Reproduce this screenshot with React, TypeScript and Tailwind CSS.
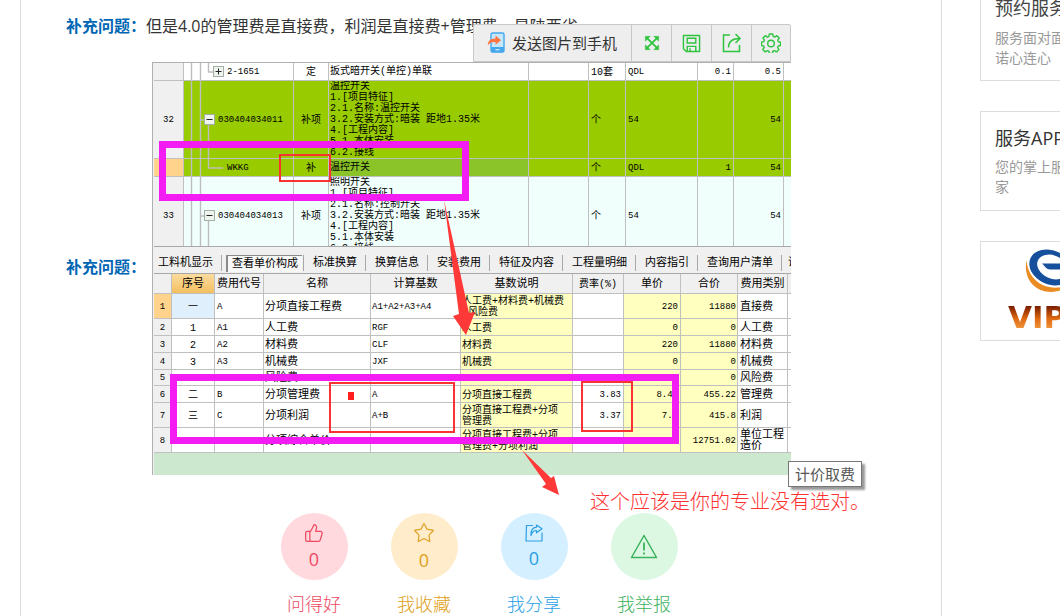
import React from 'react';
import { ThumbsUp, Star, TriangleAlert } from "lucide-react";

type TreeKind = 'plus' | 'minus' | 'leaf';

interface BillRow {
  no: string;
  tree: TreeKind;
  code: string;
  type: string;
  lines: string[];
  unit: string;
  expr: string;
  qty: string;
  total: string;
  height: number;
  rowClass: string;
  numClass: string;
  nameClass: string;
}

interface FeeRow {
  no: string;
  order: string;
  code: string;
  name: string;
  base: string;
  desc: string[];
  rate: string;
  price: string;
  total: string;
  kind: string;
  heightClass: string;
}

const billRows: BillRow[] = [
  {
    no: '', tree: 'plus', code: '2-1651', type: '定', lines: ['扳式暗开关(单控)单联'],
    unit: '10套', expr: 'QDL', qty: '0.1', total: '0.5',
    height: 18, rowClass: 'bg-white h-[18px]', numClass: 'bg-[#f0f0f0]', nameClass: 'h-[17px] pt-[3px]',
  },
  {
    no: '32', tree: 'minus', code: '030404034011', type: '补项',
    lines: ['温控开关', '1.[项目特征]', '2.1.名称:温控开关', '3.2.安装方式:暗装 距地1.35米', '4.[工程内容]', '5.1.本体安装', '6.2.接线'],
    unit: '个', expr: '54', qty: '', total: '54',
    height: 78, rowClass: 'bg-[#99cc00] h-[78px]', numClass: 'bg-[#f0f0f0]', nameClass: 'h-[77px]',
  },
  {
    no: '', tree: 'leaf', code: 'WKKG', type: '补', lines: ['温控开关'],
    unit: '个', expr: 'QDL', qty: '1', total: '54',
    height: 18, rowClass: 'bg-[#99cc00] h-[18px]', numClass: 'bg-[#ffd38c]', nameClass: 'h-[17px] pt-[3px] bg-[#8ac428]',
  },
  {
    no: '33', tree: 'minus', code: '030404034013', type: '补项',
    lines: ['照明开关', '1.[项目特征]', '2.1.名称:控制开关', '3.2.安装方式:暗装 距地1.35米', '4.[工程内容]', '5.1.本体安装', '6.2.接线'],
    unit: '个', expr: '54', qty: '', total: '54',
    height: 78, rowClass: 'bg-[#f0fffc] h-[78px]', numClass: 'bg-[#f0f0f0]', nameClass: 'h-[77px]',
  },
];

const feeRows: FeeRow[] = [
  { no: '1', order: '一', code: 'A', name: '分项直接工程费', base: 'A1+A2+A3+A4', desc: ['人工费+材料费+机械费', '+风险费'], rate: '', price: '220', total: '11880', kind: '直接费', heightClass: 'h-[25px]' },
  { no: '2', order: '1', code: 'A1', name: '人工费', base: 'RGF', desc: ['人工费'], rate: '', price: '0', total: '0', kind: '人工费', heightClass: 'h-[17px]' },
  { no: '3', order: '2', code: 'A2', name: '材料费', base: 'CLF', desc: ['材料费'], rate: '', price: '220', total: '11880', kind: '材料费', heightClass: 'h-[17px]' },
  { no: '4', order: '3', code: 'A3', name: '机械费', base: 'JXF', desc: ['机械费'], rate: '', price: '0', total: '0', kind: '机械费', heightClass: 'h-[17px]' },
  { no: '5', order: '4', code: 'A4', name: '风险费', base: '', desc: [], rate: '', price: '0', total: '0', kind: '风险费', heightClass: 'h-[16px]' },
  { no: '6', order: '二', code: 'B', name: '分项管理费', base: 'A', desc: ['分项直接工程费'], rate: '3.83', price: '8.43', total: '455.22', kind: '管理费', heightClass: 'h-[17px]' },
  { no: '7', order: '三', code: 'C', name: '分项利润', base: 'A+B', desc: ['分项直接工程费+分项', '管理费'], rate: '3.37', price: '7.7', total: '415.8', kind: '利润', heightClass: 'h-[25px]' },
  { no: '8', order: '', code: 'D', name: '分项综合单价', base: 'A+B+C', desc: ['分项直接工程费+分项', '管理费+分项利润'], rate: '', price: '236.13', total: '12751.02', kind: '单位工程造价', heightClass: 'h-[25px]' },
];

const tabs = ['标准换算', '换算信息', '安装费用', '特征及内容', '工程量明细', '内容指引', '查询用户清单'];

const cell = 'border-r border-b border-[#c0c0c0] p-0 align-middle';
const textCell = 'border-r border-b border-[#c0c0c0] p-0 pt-[2px] align-middle';
const num = 'text-[9px] leading-[11px]';
const mono = "font-['Liberation_Mono','Noto_Sans_CJK_SC',monospace]";

const TreeLines = ({ kind, height }: { kind: TreeKind; height: number }) => {
  const mid = Math.round(height / 2);
  const boxX = kind === 'plus' ? 29 : 20;
  return (
    <svg width={kind === 'minus' ? 34 : 43} height={height - 1} className="block shrink-0" aria-hidden="true">
      <g stroke="#bdbdbd" strokeWidth="1.4" fill="none">
        <path d={`M7.5 0V${height}M16.5 0V${height}`} />
        {kind === 'plus' && <path d={`M24.5 0V${mid}H29`} />}
        {kind === 'leaf' && <path d={`M24.5 0V${mid}H39`} />}
        {kind === 'minus' && <path d={`M16.5 ${mid}H20M24.5 ${mid + 5}V${height}`} />}
      </g>
      {kind !== 'leaf' && (
        <g>
          <rect x={boxX + 0.5} y={mid - 5.5} width="10" height="10" fill="#eef4ee" stroke="#a5aea5" />
          <path d={`M${boxX + 2.5} ${mid - 0.5}h6`} stroke="#222" />
          {kind === 'plus' && <path d={`M${boxX + 5.5} ${mid - 3.5}v6`} stroke="#222" />}
        </g>
      )}
    </svg>
  );
};

const BillTable = () => (
  <table className="w-full table-fixed border-separate border-spacing-0 text-[11px] leading-[11px]">
    <colgroup>
      <col className="w-[30px]" />
      <col className="w-[110px]" />
      <col className="w-[35px]" />
      <col className="w-[200px]" />
      <col className="w-[60px]" />
      <col className="w-[37px]" />
      <col className="w-[72px]" />
      <col className="w-[36px]" />
      <col className="w-[50px]" />
      <col />
    </colgroup>
    <tbody>
      {billRows.map((row, index) => (
        <tr key={index} className={row.rowClass}>
          <td className={`${textCell} ${num} ${row.numClass} text-center`}>{row.no}</td>
          <td className={cell}>
            <div className="flex items-center">
              <TreeLines kind={row.tree} height={row.height} />
              <span className={`${num} pt-px`}>{row.code}</span>
            </div>
          </td>
          <td className={`${textCell} text-center text-[10px]`}>{row.type}</td>
          <td className={cell}>
            <div className={`${row.nameClass} overflow-hidden whitespace-nowrap pl-px text-[10px]`}>
              {row.lines.map((line) => (
                <div key={line}>{line}</div>
              ))}
            </div>
          </td>
          <td className={cell}></td>
          <td className={`${textCell} pl-[2px] text-[10px]`}>{row.unit}</td>
          <td className={`${textCell} ${num} pl-[2px]`}>{row.expr}</td>
          <td className={`${textCell} ${num} pr-[2px] text-right`}>{row.qty}</td>
          <td className={`${textCell} ${num} pr-[2px] text-right`}>{row.total}</td>
          <td className="border-b border-[#c0c0c0] p-0"></td>
        </tr>
      ))}
    </tbody>
  </table>
);

const FeeTable = () => (
  <table className="w-full table-fixed border-separate border-spacing-0 text-[11px] leading-[11px]">
    <colgroup>
      <col className="w-[18px]" />
      <col className="w-[43px]" />
      <col className="w-[49px]" />
      <col className="w-[107px]" />
      <col className="w-[90px]" />
      <col className="w-[112px]" />
      <col className="w-[51px]" />
      <col className="w-[57px]" />
      <col className="w-[57px]" />
      <col className="w-[50px]" />
      <col />
    </colgroup>
    <thead>
      <tr className="h-5 whitespace-nowrap bg-[#f0f0f0]">
        <th className={cell}></th>
        <th className={`${textCell} bg-gradient-to-b from-[#fbdc9e] to-[#f3bf60] font-normal`}>序号</th>
        <th className={`${textCell} font-normal`}>费用代号</th>
        <th className={`${textCell} font-normal`}>名称</th>
        <th className={`${textCell} font-normal`}>计算基数</th>
        <th className={`${textCell} font-normal`}>基数说明</th>
        <th className={`${textCell} text-[10px] font-normal`}>费率(%)</th>
        <th className={`${textCell} font-normal`}>单价</th>
        <th className={`${textCell} font-normal`}>合价</th>
        <th className={`${textCell} font-normal`}>费用类别</th>
        <th className="border-b border-[#c0c0c0] p-0"></th>
      </tr>
    </thead>
    <tbody>
      {feeRows.map((row, index) => (
        <tr key={row.no} className={`${row.heightClass} bg-white`}>
          <td className={`${textCell} ${num} text-center ${index === 0 ? 'bg-[#ffd38c]' : 'bg-[#f0f0f0]'}`}>{row.no}</td>
          <td className={`${textCell} text-center text-[10px] ${index === 0 ? 'bg-[#dfeffc]' : ''}`}>{row.order}</td>
          <td className={`${textCell} ${num} pl-[2px]`}>{row.code}</td>
          <td className={`${textCell} pl-px`}>{row.name}</td>
          <td className={`${textCell} ${num} pl-px`}>{row.base}</td>
          <td className={`${textCell} whitespace-nowrap bg-[#ffffc0] pl-px text-[10px]`}>
            {row.desc.map((line) => (
              <div key={line}>{line}</div>
            ))}
          </td>
          <td className={`${textCell} ${num} pr-[2px] text-right`}>{row.rate}</td>
          <td className={`${textCell} ${num} bg-[#ffffc0] pr-[2px] text-right`}>{row.price}</td>
          <td className={`${textCell} ${num} bg-[#ffffc0] pr-px text-right`}>{row.total}</td>
          <td className={`${textCell} whitespace-normal pl-[2px]`}>{row.kind}</td>
          <td className="border-b border-[#c0c0c0] p-0"></td>
        </tr>
      ))}
    </tbody>
  </table>
);

const ImageToolbar = () => (
  <div className="absolute -top-[38px] right-0 flex h-[38px] rounded-t-[2px] border border-[#c8c8c8] bg-[#eeeeee]">
    <button className="flex w-[157px] items-center gap-[6px] whitespace-nowrap pl-[13px] text-[15px] leading-5 text-[#333]">
      <svg width="19" height="22" viewBox="0 0 19 22" aria-hidden="true">
        <rect x="4" y="1" width="13" height="19" rx="1.5" fill="#c5e6fb" stroke="#45a7ec" strokeWidth="1.4" />
        <path d="M4 15h13v4a1.200 1.200 0 0 1-1.200 1.200H5.200A1.200 1.200 0 0 1 4 19z" fill="#45a7ec" />
        <path d="M8.500 17.700h4" stroke="#d8effc" strokeWidth="1.200" />
        <path d="M8.500 3.500 14 8.300l-5.500 4.500V10C5 9.600 2.700 10.500.800 13.500.800 9 3.500 6.600 8.500 6.500z" fill="#ff7440" />
      </svg>
      发送图片到手机
    </button>
    <button aria-label="全屏" className="flex w-10 items-center justify-center border-l border-[#c8c8c8]">
      <svg width="16" height="16" viewBox="0 0 18 18" fill="#2fc43f" stroke="#2fc43f" aria-hidden="true">
        <path d="M4 4l10 10M14 4L4 14" strokeWidth="2" />
        <path d="M1.500 1.500h5.500l-5.500 5.500zM16.500 1.500v5.500l-5.500-5.500zM1.500 16.500v-5.500l5.500 5.500zM16.500 16.500h-5.500l5.500-5.500z" strokeWidth="0.500" />
      </svg>
    </button>
    <button aria-label="保存" className="flex w-10 items-center justify-center border-l border-[#c8c8c8]">
      <svg width="19" height="19" viewBox="0 0 20 20" fill="none" stroke="#2fc43f" strokeWidth="1.500" aria-hidden="true">
        <path d="M1.500 1.500h17v17H4.500l-3-3z" strokeLinejoin="round" />
        <path d="M5.500 4.500h9v5h-9zM5.500 18v-5h9v5M8.500 15v3" />
      </svg>
    </button>
    <button aria-label="分享" className="flex w-10 items-center justify-center border-l border-[#c8c8c8]">
      <svg width="20" height="20" viewBox="0 0 20 20" fill="none" stroke="#2fc43f" strokeWidth="1.500" aria-hidden="true">
        <path d="M8 2H1.500v16.500h16V12" />
        <path d="M6.500 14.500C6.500 8.500 9.500 5.500 18 5.500M13.500 1l4.500 4.500-4.500 4.500" />
      </svg>
    </button>
    <button aria-label="设置" className="flex w-[39px] items-center justify-center border-l border-[#c8c8c8]">
      <svg width="20" height="20" viewBox="0 0 20 20" fill="none" stroke="#2fc43f" strokeWidth="1.400" strokeLinejoin="round" aria-hidden="true">
        <path d="M8.300 1h3.400l.5 2.400 1.500.7 2.200-1.400 2.300 2.400-1.400 2.100.6 1.500 2.100.5v3.300l-2.300.5-.6 1.500 1.300 2.100-2.300 2.300-2.200-1.300-1.500.6-.5 2.300H8.300l-.5-2.300-1.500-.6-2.100 1.300-2.400-2.300 1.400-2.200-.7-1.500L.500 12.500V9.200l2.300-.6.6-1.500L2 5l2.300-2.300 2.100 1.400 1.500-.7z" />
        <circle cx="10" cy="10.500" r="3.300" />
      </svg>
    </button>
  </div>
);

const Annotations = () => (
  <>
    <div className="absolute left-[7px] top-[79px] h-[60px] w-[310px] border-[7px] border-[#f31cf3]" />
    <div className="absolute left-[127px] top-[92px] h-[28px] w-[52px] border-2 border-[#fb3232]" />
    <div className="absolute left-[18px] top-[312px] h-[70px] w-[509px] border-[7px] border-[#f31cf3]" />
    <div className="absolute left-[177px] top-[320px] h-[51px] w-[126px] border-2 border-[#fb3232]" />
    <div className="absolute left-[429px] top-[319px] h-[51px] w-[52px] border-2 border-[#fb3232]" />
    <div className="absolute left-[196px] top-[330px] h-[8px] w-[6px] bg-[#ff1f1f]" />
    <svg className="absolute left-0 top-0 overflow-visible" width="639" height="413" aria-hidden="true">
      <path d="M292 138 L317 251 L323 250 L314 273 L301 254 L307 252 Z" fill="#ff3838" />
      <path d="M370 388 L399 416 L402 414 L407 433 L390 425 L394 422 Z" fill="#ff3838" />
    </svg>
    <div className="absolute left-[636px] top-[399px] whitespace-nowrap border border-[#767676] bg-white px-[6px] text-[15px] leading-[24px] text-[#575757] shadow-[3px_3px_2px_rgba(0,0,0,0.4)]">
      计价取费
    </div>
    <p className="absolute left-[438px] top-[427px] z-10 whitespace-nowrap text-[20px] font-light leading-[26px] text-[#ff3030]">
      这个应该是你的专业没有选对。
    </p>
  </>
);

const QuestionImage = () => (
  <div className="relative w-[639px] shrink-0">
    <div className={`${mono} overflow-hidden border-l border-t border-[#b0b0b0] bg-[#f0f0f0] pl-px text-black`}>
      <div className="h-[183px] overflow-hidden">
        <BillTable />
      </div>
      <div className="flex h-7 items-center overflow-hidden whitespace-nowrap border-y border-[#a8a8a8] bg-[#f0f0f0] pt-[6px] text-[11px] leading-4">
        <button className="border-r border-[#a8a8a8] pl-1 pr-2">工料机显示</button>
        <button className="ml-1 mr-px border-l-2 border-t border-[#8a8a8a] bg-[#f7f7f7] px-1">查看单价构成</button>
        <span className="h-4 border-l border-[#a8a8a8]" />
        {tabs.map((tab) => (
          <button key={tab} className="border-r border-[#a8a8a8] pl-[9px] pr-2">{tab}</button>
        ))}
        <button className="pl-[6px]">说</button>
      </div>
      <FeeTable />
      <div className="h-[22px] bg-[#cce8cf]" />
    </div>
    <Annotations />
    <ImageToolbar />
  </div>
);

const ShareIcon = () => (
  <svg width="18" height="18" viewBox="0 0 18 18" fill="none" stroke="currentColor" strokeWidth="1.200" strokeLinejoin="round" aria-hidden="true">
    <path d="M8 1.500H1.500L1 17h16V8.500" />
    <path d="M11.500 1l5.500 3.800-5.500 4V6.500C8.500 6.500 7 8 6 11.500 5.500 6.500 7.500 3.500 11.500 3.200z" />
  </svg>
);

const actions = [
  { label: '问得好', count: '0', icon: <ThumbsUp size={20} strokeWidth={1.5} />, color: 'text-[#ee4a62]', circle: 'bg-[#ffd9de]' },
  { label: '我收藏', count: '0', icon: <Star size={22} strokeWidth={1.3} />, color: 'text-[#e0a020]', circle: 'bg-[#ffeccb]' },
  { label: '我分享', count: '0', icon: <ShareIcon />, color: 'text-[#2b9fe6]', circle: 'bg-[#d4efff]' },
  {
    label: '我举报',
    count: '',
    icon: (
      <svg width="28" height="26" viewBox="0 0 28 26" fill="none" stroke="currentColor" strokeWidth="1.500" strokeLinejoin="round" aria-hidden="true">
        <path d="M14 1.500 26.500 23.500H1.500z" />
        <path d="M14 8.500v8M14 18.500v2" strokeWidth="1.800" />
      </svg>
    ),
    color: 'text-[#3bb25c]',
    circle: 'bg-[#dcf8e3]',
  },
];

const Sidebar = () => (
  <aside className="w-[118px] shrink-0 pl-[38px]">
    <div className="flex w-[240px] flex-col gap-[30px] whitespace-nowrap">
      <section className="h-[81px] border-x border-b border-[#dcdcdc] pl-[14px]">
        <h3 className="text-[18px] leading-4 text-[#444]">预约服务</h3>
        <p className="mt-3 text-[14px] leading-5 text-[#999]">服务面对面<br />诺心连心</p>
      </section>
      <section className="h-[100px] border border-[#dcdcdc] pl-[14px] pt-[14px]">
        <h3 className="text-[18px] leading-6 text-[#333]">服务APP</h3>
        <p className="mt-[7px] text-[14px] leading-5 text-[#999]">您的掌上服<br />家</p>
      </section>
      <section className="h-[100px] border border-[#dcdcdc] pl-[27px] pt-1">
        <svg width="90" height="56" viewBox="0 0 90 56" className="block" aria-hidden="true">
          <path d="M18.500 14C15 32 26 46 43 46c8 0 15-3 19-8-10 5-22 5-31-1-7-5-12-13-12.500-23z" fill="#ea8c22" />
          <ellipse cx="43" cy="21.500" rx="22.500" ry="17" transform="rotate(24 43 21.500)" fill="#164f9c" />
          <ellipse cx="44.500" cy="21" rx="16" ry="11.500" transform="rotate(24 44.500 21)" fill="#fff" />
          <path d="M34 17.500h32v6H42c-3 0-5-3-8-6z" fill="#164f9c" />
        </svg>
        <div className="-mt-[3px] inline-block bg-gradient-to-b from-[#7a1d00] from-20% via-[#e06a10] via-55% to-[#f7b04f] bg-clip-text font-['DejaVu_Sans',sans-serif] text-[31px] font-bold leading-9 text-transparent">
          VIP
        </div>
      </section>
    </div>
  </aside>
);

const App = () => {
  return (
    <div className="flex min-h-screen overflow-hidden bg-white pl-5 font-['Open_Sans','Noto_Sans_CJK_SC',sans-serif]">
      <main className="min-w-0 flex-1 border-x border-[#dcdcdc] pt-[14px]">
        <div className="flex whitespace-nowrap pl-[45px] text-[16px] leading-6">
          <strong className="text-[#0066b3]">补充问题：</strong>
          <span className="text-[#333]">但是4.0的管理费是直接费，利润是直接费+管理费，是陕西省</span>
        </div>

        <div className="mt-6 flex items-center gap-[6px] whitespace-nowrap pl-[45px] text-[16px] leading-6">
          <strong className="pb-1 text-[#0066b3]">补充问题：</strong>
          <QuestionImage />
        </div>

        {/* 点赞 / 收藏 / 分享 / 举报 */}
        <div className="mt-[38px] flex justify-center gap-[43px] pr-1">
          {actions.map((action) => (
            <button key={action.label} className={`flex w-[67px] flex-col items-center ${action.color}`}>
              <span className={`flex h-[67px] w-full flex-col items-center justify-center rounded-full ${action.circle}`}>
                {action.icon}
                {action.count && <span className="mt-1 text-[18px] leading-6">{action.count}</span>}
              </span>
              <span className="mt-3 whitespace-nowrap text-[18px] font-light leading-6">{action.label}</span>
            </button>
          ))}
        </div>
      </main>
      <Sidebar />
    </div>
  );
};

export default App;
